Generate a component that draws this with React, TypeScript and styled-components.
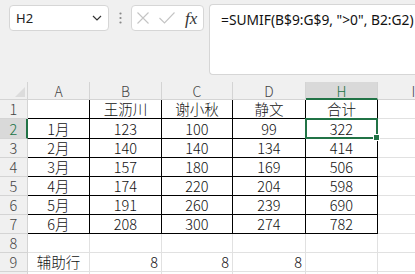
import React from "react";
import styled, { createGlobalStyle } from "styled-components";

const GlobalStyle = createGlobalStyle`
  html, body { margin: 0; padding: 0; }
  body {
    background: #f0f0f0;
    width: 415px;
    height: 274px;
    overflow: hidden;
    font-family: "Noto Sans", "Noto Sans CJK SC", sans-serif;
  }
`;

const GREEN = "#217346";

const Toolbar = styled.div`
  height: 82px;
  display: flex;
  align-items: flex-start;
  padding: 4px 0 0 9px;
  box-sizing: border-box;
`;

const NameBox = styled.div`
  margin-top: 1px;
  width: 100px;
  height: 26px;
  box-sizing: border-box;
  background: #fff;
  border: 1px solid #d6d6d6;
  border-radius: 4px;
  display: flex;
  align-items: center;
  justify-content: space-between;
  padding: 0 6px 0 6px;
  font-size: 13px;
  color: #222;
`;

const Dots = styled.div`
  width: 22px;
  height: 26px;
  margin-top: 1px;
  display: flex;
  align-items: center;
  justify-content: center;
`;

const FxBox = styled.div`
  margin-top: 1px;
  width: 73px;
  height: 26px;
  box-sizing: border-box;
  background: #fff;
  border: 1px solid #d6d6d6;
  border-radius: 4px;
  display: flex;
  align-items: center;
  padding: 0 4px 0 5px;
  gap: 10px;
`;

const Fx = styled.span`
  font-family: "Liberation Serif", "DejaVu Serif", serif;
  font-style: italic;
  font-size: 17px;
  color: #333;
  line-height: 1;
`;

const FormulaBox = styled.div`
  margin-left: 5px;
  flex: 1;
  height: 71px;
  box-sizing: border-box;
  background: #fff;
  border: 1px solid #d6d6d6;
  border-right: none;
  border-radius: 4px 0 0 4px;
  padding: 5px 0 0 11px;
  font-size: 13.8px;
  color: #111;
  white-space: nowrap;
  overflow: hidden;
`;

const Sheet = styled.div`
  display: grid;
  grid-template-columns: 28px 62px 72px 71px 73px 72px 72px;
  grid-template-rows: 18px 19px 20px repeat(8, 19px);
  font-family: "Noto Sans CJK SC", "Noto Sans", sans-serif;
  font-weight: 300;
`;

const Corner = styled.div`
  border-right: 1px solid #d4d4d4;
  border-bottom: 1px solid #d4d4d4;
  display: flex;
  align-items: flex-end;
  justify-content: flex-end;
  padding: 0 2px 2px 0;
`;

const ColHeader = styled.div<{ $active?: boolean }>`
  background: ${(p) => (p.$active ? "#d9d9d9" : "#f0f0f0")};
  border-right: 1px solid #d4d4d4;
  border-bottom: ${(p) => (p.$active ? `2px solid ${GREEN}` : "1px solid #d4d4d4")};
  color: ${(p) => (p.$active ? GREEN : "#444")};
  font-size: 14px;
  display: flex;
  align-items: center;
  justify-content: center;
  line-height: 1;
  padding-top: 1px;
`;

const RowHeader = styled.div<{ $active?: boolean }>`
  background: ${(p) => (p.$active ? "#d9d9d9" : "#f0f0f0")};
  border-right: ${(p) => (p.$active ? `2px solid ${GREEN}` : "1px solid #d4d4d4")};
  border-bottom: 1px solid #d4d4d4;
  color: ${(p) => (p.$active ? GREEN : "#444")};
  font-size: 14.5px;
  display: flex;
  align-items: center;
  justify-content: center;
  line-height: 1;
  padding-top: 1px;
  padding-left: ${(p) => (p.$active ? "1px" : "0")};
`;

const Cell = styled.div<{ $right?: boolean; $bottom?: boolean; $align?: string }>`
  background: #fff;
  border-right: 1px solid ${(p) => (p.$right ? "#000" : "#e1e1e1")};
  border-bottom: 1px solid ${(p) => (p.$bottom ? "#000" : "#e1e1e1")};
  display: flex;
  align-items: center;
  justify-content: ${(p) => p.$align || "center"};
  padding: 1px 3px 0 3px;
  font-size: 14.5px;
  color: #111;
  line-height: 1;
  white-space: nowrap;
  overflow: hidden;
  min-width: 0;
`;

const SelectedCell = styled(Cell)`
  position: relative;
  overflow: visible;
`;

const Selection = styled.div`
  position: absolute;
  top: -1px;
  left: -1px;
  right: -1px;
  bottom: -1px;
  border: 2px solid ${GREEN};
  z-index: 2;
  pointer-events: none;
`;

const Handle = styled.div`
  position: absolute;
  right: -4px;
  bottom: -4px;
  width: 5px;
  height: 5px;
  background: ${GREEN};
  border: 1px solid #fff;
`;

const cols = ["A", "B", "C", "D", "H"];

const data: string[][] = [
  ["", "王沥川", "谢小秋", "静文", "合计"],
  ["1月", "123", "100", "99", "322"],
  ["2月", "140", "140", "134", "414"],
  ["3月", "157", "180", "169", "506"],
  ["4月", "174", "220", "204", "598"],
  ["5月", "191", "260", "239", "690"],
  ["6月", "208", "300", "274", "782"],
  ["", "", "", "", ""],
  ["辅助行", "8", "8", "8", ""],
  ["", "", "", "", ""],
];

export default function App() {
  return (
    <>
      <GlobalStyle />
      <Toolbar>
        <NameBox>
          <span>H2</span>
          <svg width="10" height="6" viewBox="0 0 10 6">
            <path d="M1 1 L5 5 L9 1" fill="none" stroke="#333" strokeWidth="1.2" />
          </svg>
        </NameBox>
        <Dots>
          <svg width="3" height="12" viewBox="0 0 3 12">
            <circle cx="1.5" cy="1.5" r="1.1" fill="#888" />
            <circle cx="1.5" cy="6" r="1.1" fill="#888" />
            <circle cx="1.5" cy="10.5" r="1.1" fill="#888" />
          </svg>
        </Dots>
        <FxBox>
          <svg width="12" height="12" viewBox="0 0 12 12">
            <path d="M0.5 0.5 L11.5 11.5 M11.5 0.5 L0.5 11.5" stroke="#c4c4c4" strokeWidth="1.1" fill="none" />
          </svg>
          <svg width="16" height="12" viewBox="0 0 16 12">
            <path d="M0.5 6 L5.5 11 L15.5 0.5" stroke="#c4c4c4" strokeWidth="1.1" fill="none" />
          </svg>
          <Fx>fx</Fx>
        </FxBox>
        <FormulaBox>=SUMIF(B$9:G$9, "&gt;0", B2:G2)</FormulaBox>
      </Toolbar>
      <Sheet>
        <Corner>
          <svg width="10" height="10" viewBox="0 0 10 10">
            <path d="M10 0 L10 10 L0 10 Z" fill="#dcdcdc" />
          </svg>
        </Corner>
        {cols.map((c) => (
          <ColHeader key={c} $active={c === "H"}>
            {c}
          </ColHeader>
        ))}
        <ColHeader>I</ColHeader>
        {data.map((row, r) => {
          const rowNo = r + 1;
          const inTable = rowNo <= 7;
          const align = rowNo === 9 ? "flex-end" : "center";
          return (
            <React.Fragment key={rowNo}>
              <RowHeader $active={rowNo === 2}>{rowNo}</RowHeader>
              {row.map((v, c) => {
                if (rowNo === 2 && c === 4) {
                  return (
                    <SelectedCell key={c} $right $bottom>
                      {v}
                      <Selection>
                        <Handle />
                      </Selection>
                    </SelectedCell>
                  );
                }
                return (
                  <Cell
                    key={c}
                    $right={inTable}
                    $bottom={inTable}
                    $align={c > 0 ? align : "center"}
                  >
                    {v}
                  </Cell>
                );
              })}
              <Cell />
            </React.Fragment>
          );
        })}
      </Sheet>
    </>
  );
}
